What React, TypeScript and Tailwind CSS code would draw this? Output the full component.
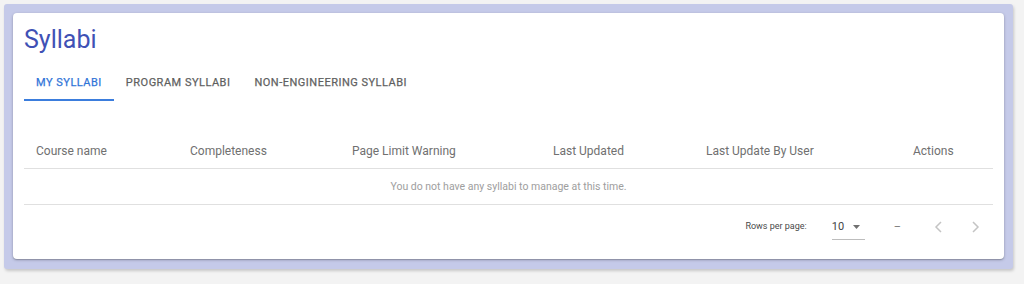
import React from 'react';

const tabs = ['MY SYLLABI', 'PROGRAM SYLLABI', 'NON-ENGINEERING SYLLABI'];

const columns = [
  { label: 'Course name', width: 'w-[154px]' },
  { label: 'Completeness', width: 'w-[162px]' },
  { label: 'Page Limit Warning', width: 'w-[201px]' },
  { label: 'Last Updated', width: 'w-[153px]' },
  { label: 'Last Update By User', width: 'w-[207px]' },
  { label: 'Actions', width: 'flex-1' },
];

const App: React.FC = () => {
  return (
    <div className="min-h-[284px] bg-[#f3f3f3] pt-[4px] pl-[4px] pr-[11px] font-['Roboto',_'Liberation_Sans',_sans-serif]">
      <div className="rounded-[3px] bg-[#c5cae9] pt-[9px] pb-[10px] px-[9px] shadow-[1px_2px_3px_rgba(0,0,0,0.18)]">
        <div className="rounded-[4px] bg-white px-[11px] pt-[11px] pb-[11px] shadow-[0_1px_3px_rgba(0,0,0,0.25),0_1px_1px_rgba(0,0,0,0.14)]">
          <h1 className="h-[32px] text-[25px] leading-[32px] text-[#3f51b5]">Syllabi</h1>

          <div className="mt-[9px] flex h-[36px]">
            {tabs.map((tab, i) => (
              <div
                key={tab}
                className={
                  i === 0
                    ? 'flex items-center border-b-2 border-[#3b7ddd] px-3 pt-[3px] text-[11px] tracking-[0.045em] text-[#2f74d8] [-webkit-text-stroke:0.25px_#2f74d8]'
                    : 'flex items-center border-b-2 border-transparent px-3 pt-[3px] text-[11px] tracking-[0.045em] text-[#5f5f5f] [-webkit-text-stroke:0.25px_#5f5f5f]'
                }
              >
                {tab}
              </div>
            ))}
          </div>

          <div className="mt-[33px]">
            <div className="flex h-[35px] items-center border-b border-[#e0e0e0]">
              {columns.map((c) => (
                <div key={c.label} className={`${c.width} pl-3 text-[12px] text-[#707070]`}>
                  {c.label}
                </div>
              ))}
            </div>
            <div className="flex h-[36px] items-center justify-center border-b border-[#e0e0e0] pt-[1px] text-[10.5px] text-[#9e9e9e]">
              You do not have any syllabi to manage at this time.
            </div>
            <div className="flex h-[43px] items-center justify-end pt-[1px]">
              <span className="text-[9px] text-[#4a4a4a]">Rows per page:</span>
              <div className="ml-[25px] flex h-[26px] w-[33px] items-center border-b border-[#bdbdbd] pt-[1px]">
                <span className="text-[11px] text-[#444]">10</span>
                <svg className="ml-auto mr-[5px]" width="7" height="4" viewBox="0 0 7 4">
                  <path d="M0 0h7L3.5 4z" fill="#707070" />
                </svg>
              </div>
              <span className="ml-[29px] text-[11px] text-[#777]">–</span>
              <svg className="ml-[33px]" width="10" height="12" viewBox="0 0 10 12">
                <path d="M7 1L2 6l5 5" fill="none" stroke="#c4c4c4" strokeWidth="1.5" />
              </svg>
              <svg className="ml-[26px] mr-[13px]" width="10" height="12" viewBox="0 0 10 12">
                <path d="M3 1l5 5-5 5" fill="none" stroke="#c4c4c4" strokeWidth="1.5" />
              </svg>
            </div>
          </div>
        </div>
      </div>
    </div>
  );
};

export default App;
